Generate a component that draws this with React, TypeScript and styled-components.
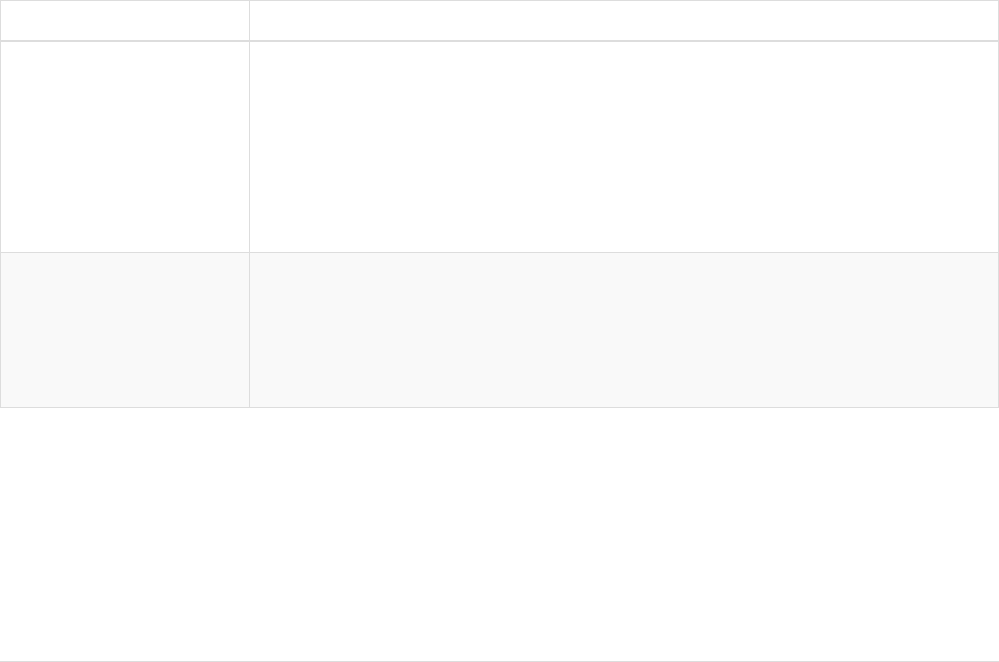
import React from 'react';
import styled, { createGlobalStyle } from 'styled-components';

const GlobalStyle = createGlobalStyle`
  html, body {
    margin: 0;
    padding: 0;
    background: #fff;
    font-family: "Liberation Sans", Arial, sans-serif;
    font-size: 14px;
    color: #333;
  }
`;

const Page = styled.div`
  box-sizing: border-box;
  width: 999px;
  height: 662px;
  border-bottom: 1px solid #ddd;
`;

const Table = styled.table`
  width: 999px;
  border-collapse: separate;
  border-spacing: 0;
  border-top: 1px solid #ddd;
  border-left: 1px solid #ddd;
  table-layout: fixed;
`;

const HeadCell = styled.th<{ $width?: number }>`
  box-sizing: border-box;
  width: ${p => (p.$width ? `${p.$width}px` : 'auto')};
  height: 41px;
  padding: 0 8px;
  border-right: 1px solid #ddd;
  border-bottom: 2px solid #ddd;
  text-align: left;
  font-weight: bold;
`;

const Row = styled.tr<{ $striped?: boolean }>`
  background: ${p => (p.$striped ? '#f9f9f9' : '#fff')};
`;

const Cell = styled.td<{ $height: number }>`
  box-sizing: border-box;
  height: ${p => p.$height}px;
  padding: 8px;
  border-right: 1px solid #ddd;
  border-bottom: 1px solid #ddd;
  vertical-align: top;
`;

const rows = [
  { height: 211, striped: false },
  { height: 155, striped: true },
];

const App: React.FC = () => {
  return (
    <>
      <GlobalStyle />
      <Page>
        <Table>
          <thead>
            <tr>
              <HeadCell $width={249}></HeadCell>
              <HeadCell></HeadCell>
            </tr>
          </thead>
          <tbody>
            {rows.map((r, i) => (
              <Row key={i} $striped={r.striped}>
                <Cell $height={r.height}></Cell>
                <Cell $height={r.height}></Cell>
              </Row>
            ))}
          </tbody>
        </Table>
      </Page>
    </>
  );
};

export default App;
